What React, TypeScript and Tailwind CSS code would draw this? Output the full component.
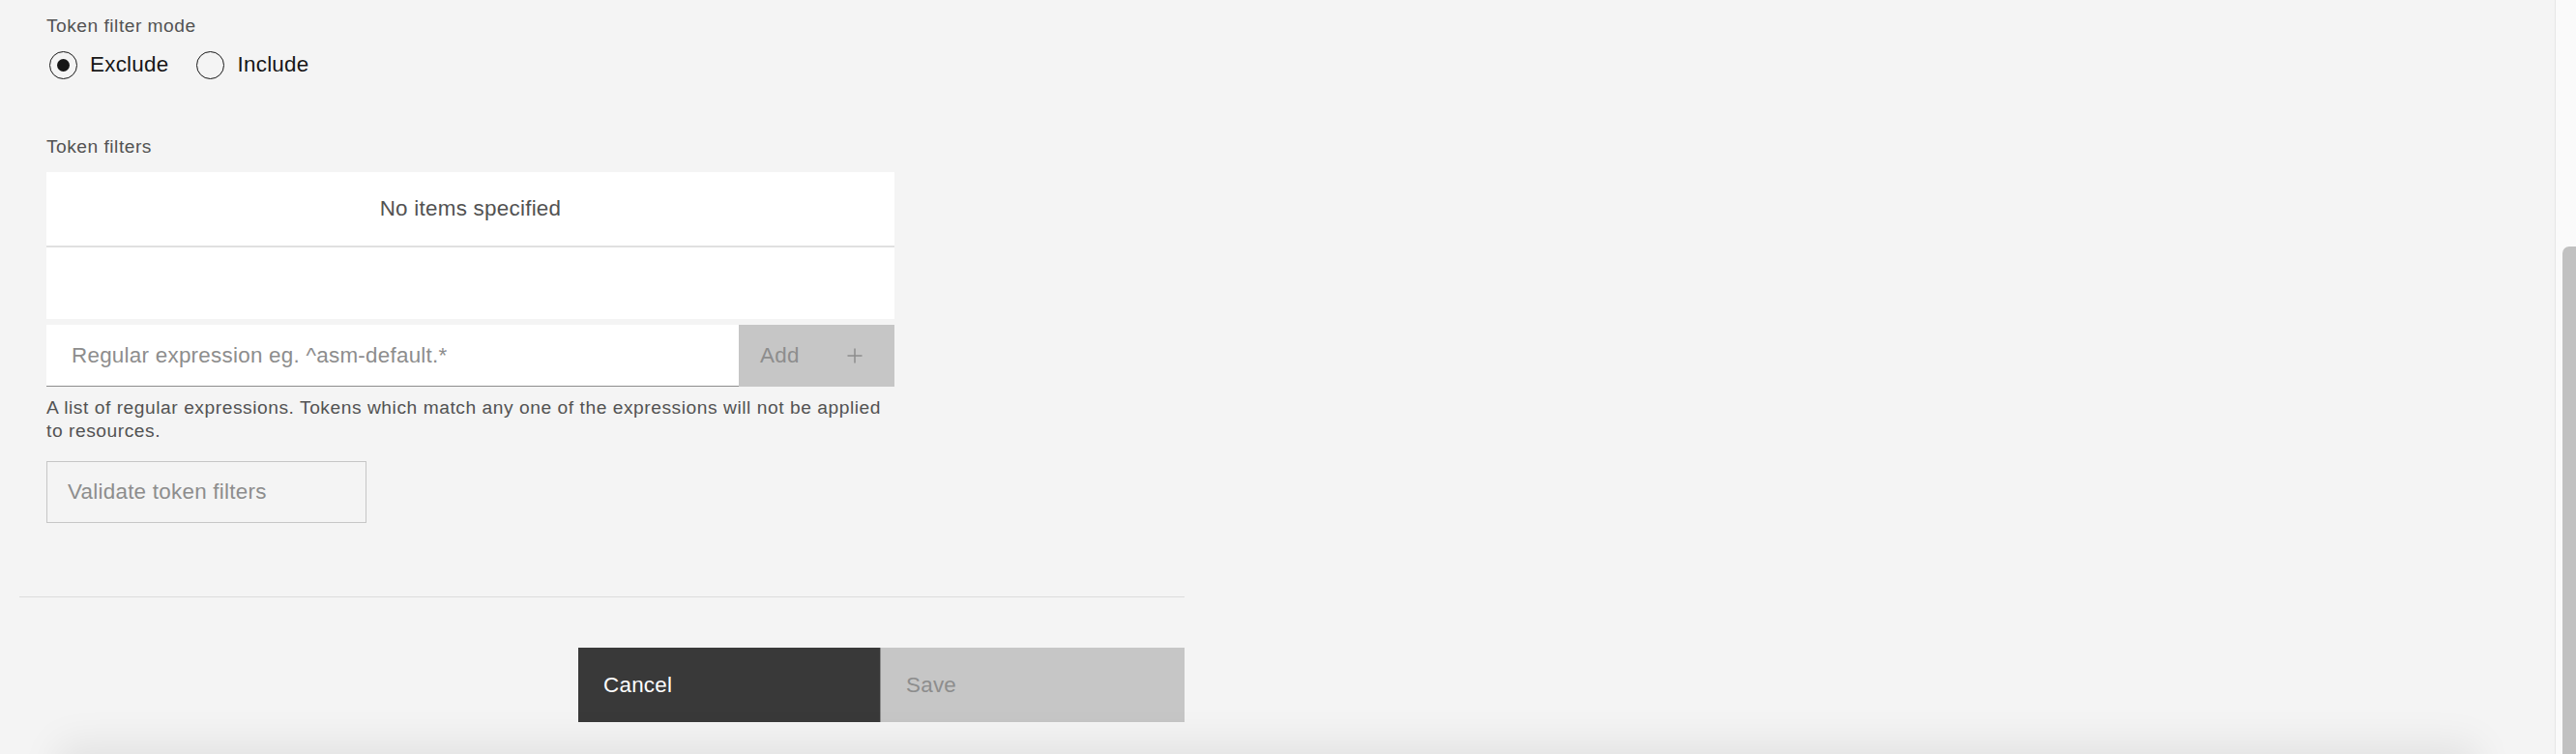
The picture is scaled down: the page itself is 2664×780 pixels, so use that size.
import React from "react";

function Radio({ label, checked }: { label: string; checked?: boolean }) {
  return (
    <div className="flex items-start mr-[29px]">
      <div className="h-[32px] w-[29px] flex items-center">
        <div className="w-[29px] h-[29px] rounded-full border-[1.5px] border-[#161616] flex items-center justify-center">
          {checked ? <div className="w-[13px] h-[13px] rounded-full bg-[#161616]" /> : null}
        </div>
      </div>
      <span className="ml-[13px] text-[22.4px] leading-[29px] tracking-[0.26px] text-[#161616]">{label}</span>
    </div>
  );
}

export default function App() {
  return (
    <div className="w-[2664px] h-[780px] overflow-hidden flex bg-[#f4f4f4] font-['Liberation_Sans',Arial,sans-serif]">
      <div className="relative flex-1 h-full overflow-hidden bg-[#f4f4f4]">
        <div className="pl-[20px] w-[1225px]">
          <div className="pl-[28px]">
            <div className="pt-[14px]">
              <div className="text-[19.2px] leading-[25.6px] tracking-[0.5px] text-[#525252]">Token filter mode</div>
            </div>
            <div className="mt-[12px] h-[32px] flex items-start pl-[3px]">
              <Radio label="Exclude" checked />
              <Radio label="Include" />
            </div>
            <div className="mt-[55px] text-[19.2px] leading-[25.6px] tracking-[0.5px] text-[#525252]">Token filters</div>
            <div className="mt-[14px] w-[877px] bg-white">
              <div className="h-[76px] flex items-center justify-center text-[22.4px] tracking-[0.26px] text-[#525252]">
                No items specified
              </div>
              <div className="h-[2px] bg-[#e0e0e0]" />
              <div className="h-[74px]" />
            </div>
            <div className="mt-[6px] w-[877px] h-[64px] flex">
              <div className="flex-1 bg-white border-b border-[#8d8d8d] flex items-center pl-[26px] text-[22.4px] tracking-[0.26px] text-[#8d8d8d]">
                Regular expression eg. ^asm-default.*
              </div>
              <div className="w-[161px] h-[64px] bg-[#c6c6c6] flex items-center justify-between pl-[22px] pr-[33px] text-[22.4px] tracking-[0.26px] text-[#8d8d8d]">
                <span>Add</span>
                <svg width="16" height="16" viewBox="0 0 16 16" fill="none">
                  <path d="M8 0.5V15.5M0.5 8H15.5" stroke="#8d8d8d" strokeWidth="1.5" />
                </svg>
              </div>
            </div>
            <div className="mt-[10px] w-[877px] text-[19.2px] leading-[24px] tracking-[0.55px] text-[#525252]">
              A list of regular expressions. Tokens which match any one of the expressions will not be applied to resources.
            </div>
            <div className="mt-[19px] w-[331px] h-[64px] border border-[#c6c6c6] flex items-center pl-[21px] text-[22.4px] tracking-[0.26px] text-[#8d8d8d]">
              Validate token filters
            </div>
          </div>
          <div className="mt-[76px] h-px bg-[#dcdcdc]" />
          <div className="mt-[52px] flex justify-end">
            <div className="w-[312px] h-[77px] bg-[#393939] flex items-center pl-[26px] text-[22.4px] tracking-[0.26px] text-white">
              Cancel
            </div>
            <div className="w-px h-[77px] bg-[#8d8d8d]" />
            <div className="w-[314px] h-[77px] bg-[#c6c6c6] flex items-center pl-[26px] text-[22.4px] tracking-[0.26px] text-[#8d8d8d]">
              Save
            </div>
          </div>
        </div>
        <div className="absolute left-[70px] right-[90px] top-[780px] h-[100px] shadow-[0_0_40px_10px_rgba(0,0,0,0.08)]" />
      </div>
      <div className="relative w-[22px] h-full border-l border-[#e6e6e6] bg-[#fafafa]">
        <div className="absolute left-[7px] right-0 top-[255px] bottom-0 bg-[#c1c1c1] rounded-tl-[7px]" />
      </div>
    </div>
  );
}
